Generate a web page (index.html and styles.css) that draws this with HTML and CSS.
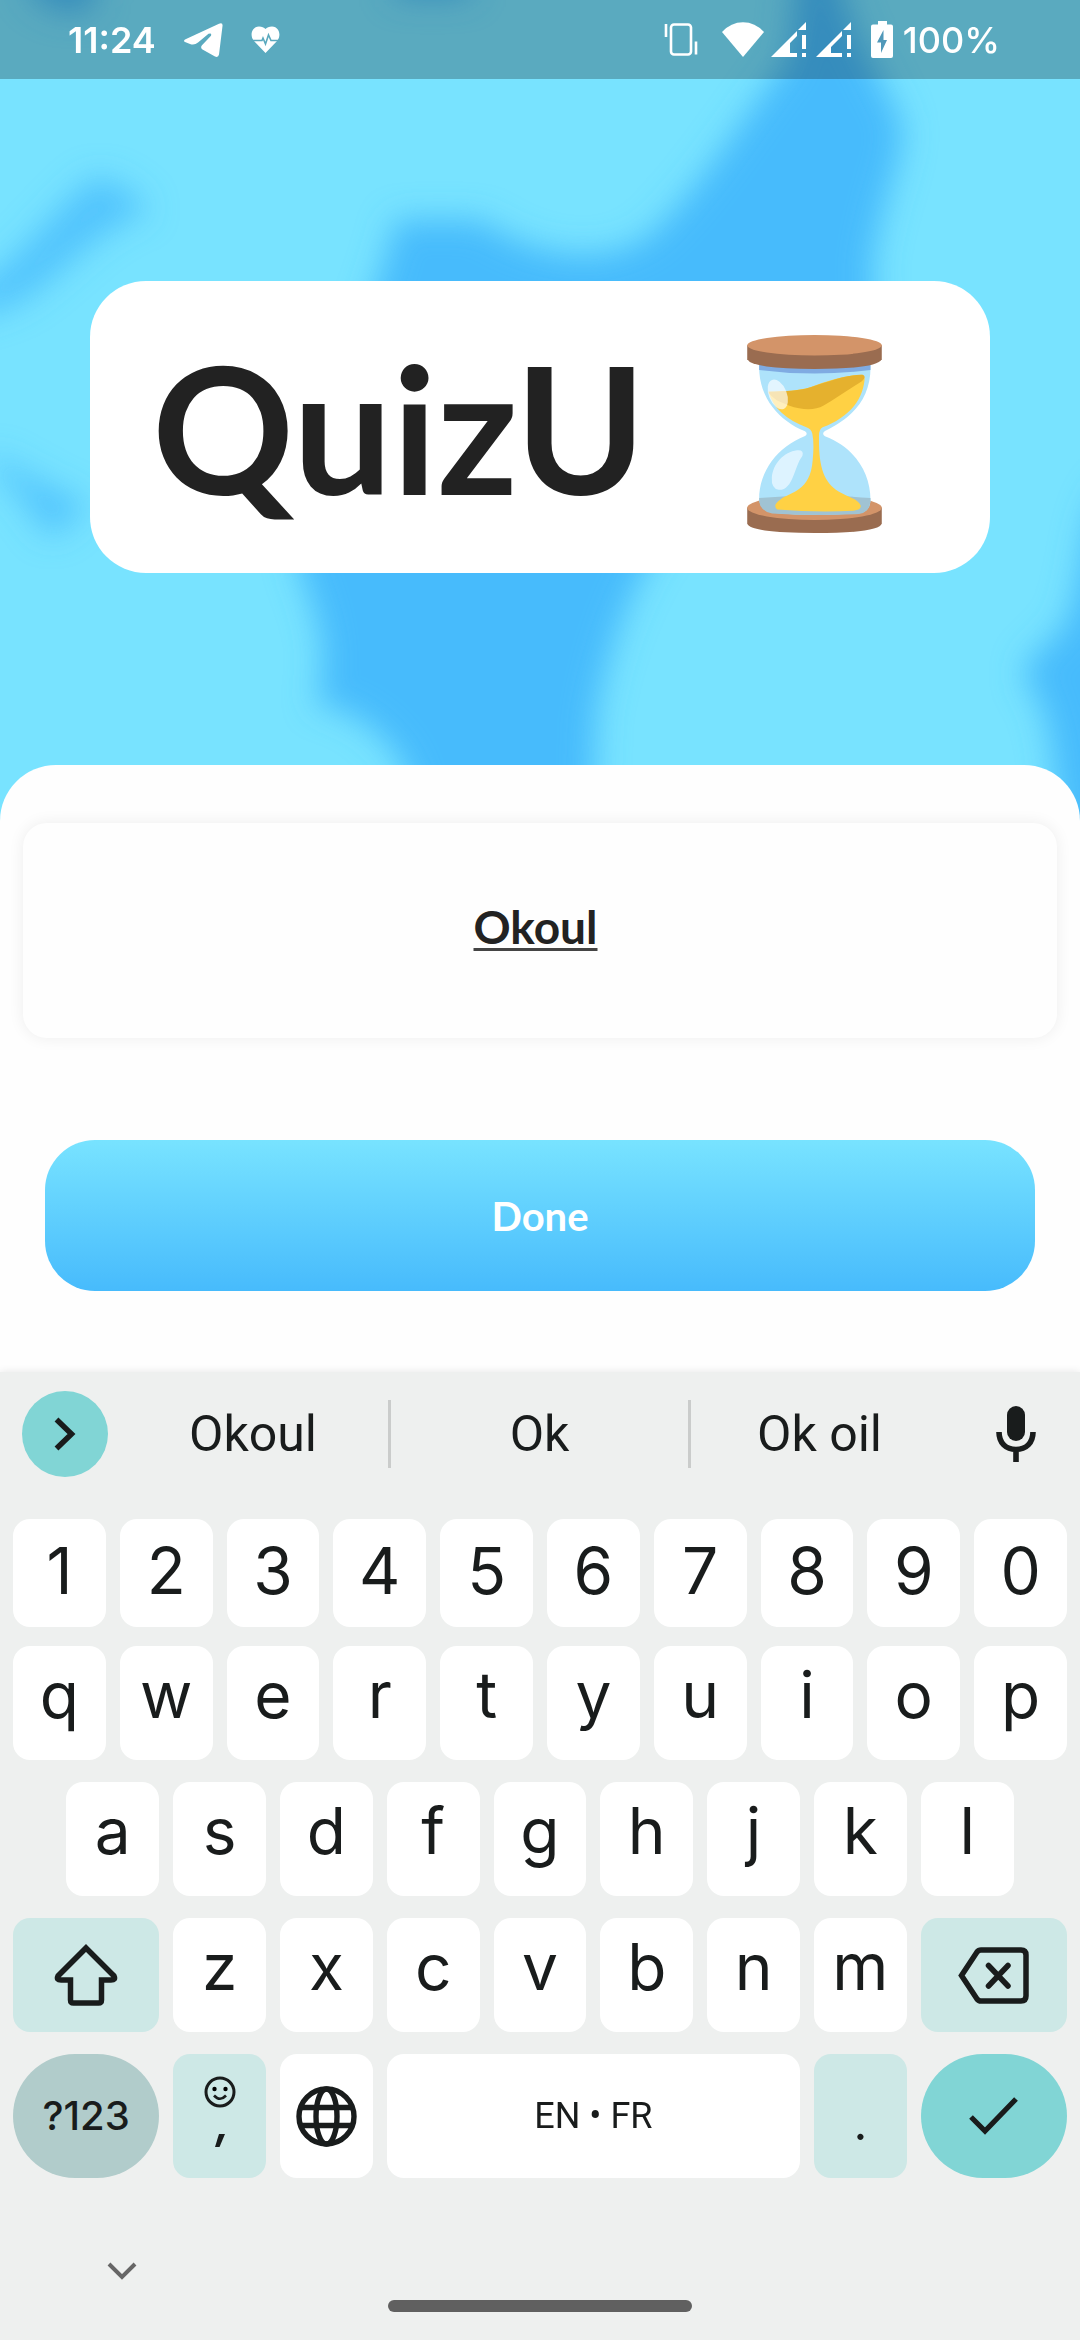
FILE: index.html
```html
<!DOCTYPE html>
<html lang="en">
<head>
<meta charset="utf-8">
<meta name="viewport" content="width=device-width, initial-scale=1">
<title>QuizU</title>
<link rel="stylesheet" href="styles.css">
</head>
<body>
<section class="hero">
  <svg class="hero-art" viewBox="0 0 1080 830" preserveAspectRatio="none" aria-hidden="true">
    <defs><filter id="soft" x="-20%" y="-20%" width="140%" height="140%"><feGaussianBlur stdDeviation="16"/></filter></defs>
    <g fill="#47bbfc" filter="url(#soft)">
      <path d="M798 -40H836C845 30 885 80 902 125C905 160 880 200 872 270C890 400 820 450 700 500C650 540 610 630 596 720L590 880H440L405 770C390 740 360 712 315 704C335 650 310 600 296 560C300 450 370 330 396 220H480C530 255 600 270 650 235C700 190 755 100 788 60Z"/>
      <path opacity=".8" d="M-30 290C20 265 60 200 95 178C120 180 140 200 150 212C100 222 60 280 14 305L-30 320Z"/>
      <path opacity=".8" d="M-10 455C20 470 50 490 88 504C75 520 60 530 50 538C30 510 10 480 -10 470Z"/>
      <path d="M30 -40H95V2C80 20 50 12 30 -8Z"/>
      <path d="M395 -40H470V-4H395Z"/>
      <path d="M1120 480C1080 500 1090 560 1068 620C1050 650 1020 660 1025 680C1045 700 1052 740 1055 780L1070 880H1120Z"/>
    </g>
  </svg>
  <header class="status">
    <div class="status-group">
      <time class="clock">11:24</time>
      <svg class="st-telegram" width="39" height="34" viewBox="0 0 39 34" fill="#fff"><path d="M1 16.500L35 .7Q39 -.8 38.500 3L35 31.500Q34.200 35 31 33.500L18.500 26.500Q16 24.500 18 22.200L27 12.800Q28 9.500 24.500 10.800L14 19.500Q10.500 22.500 6 21L1 19Q-1 18 1 16.500Z"/></svg>
      <svg width="29" height="27" viewBox="0 0 29 27"><path fill="#fff" d="M14.500 27L2.500 14.500C-1 10 0 1 8 .5C11 .5 13 1.500 14.500 3C16 1.500 18 .5 21 .5C29 1 30 10 26.500 14.500Z"/><path fill="none" stroke="#5aa9be" stroke-width="1.600" d="M0 14.500H11L12 12L14.500 18L17.500 9L20 14.500H29"/></svg>
    </div>
    <div class="status-group status-right">
      <svg class="st-vibrate" width="34" height="33" viewBox="0 0 34 33" fill="none" stroke="#fff" stroke-width="2.600"><rect x="7" y="1.500" width="20" height="30" rx="3"/><path d="M2 1v13M32 18.500v13"/></svg>
      <svg class="st-wifi" width="42" height="35" viewBox="0 0 42 35" fill="#fff"><path d="M0 10Q9 .3 21 .3T42 10L21 35Z"/></svg>
      <svg class="st-signal" width="35" height="35" viewBox="0 0 35 35" fill="#fff"><path d="M0 35L26 9V14L19 21V31H26V35ZM27 8L35 0V8ZM31 13h4v14h-4ZM31 31h4v4h-4Z"/></svg>
      <svg class="st-signal-2" width="35" height="35" viewBox="0 0 35 35" fill="#fff"><path d="M0 35L26 9V14L15 25V31H26V35ZM27 8L35 0V8ZM31 13h4v14h-4ZM31 31h4v4h-4Z"/></svg>
      <svg class="st-battery" width="22" height="37" viewBox="0 0 22 37"><path fill="#fff" d="M7 0h9v3.500h4q2 0 2 2V35q0 2-2 2H2q-2 0-2-2V5.500q0-2 2-2h5Z"/><path fill="#5098b9" d="M12.500 9L6 21.500h4V32L16 19H12.500Z"/></svg>
      <span class="clock">100%</span>
    </div>
  </header>
  <div class="logo-card">
    <h1 class="logo-text">QuizU</h1>
    <svg class="hourglass" width="135" height="198" viewBox="200 103 405 596" aria-label="Hourglass">
      <path fill="#9a6c50" d="M200 622V670Q205 699 403 699T605 670V622Z"/>
      <ellipse cx="402.500" cy="623" rx="202.500" ry="37" fill="#d39469"/>
      <path fill="#aee3fb" d="M236 190H571C575 300 510 355 434 392Q423 400 434 408C520 440 572 515 571 602Q568 640 530 640Q403 650 275 638Q240 632 236 602C234 515 290 440 374 407Q384 400 374 393C295 360 232 290 236 190Z"/>
      <path fill="#a0c3d3" d="M236 594Q403 578 571 594V604Q567 638 535 642Q403 648 275 640Q240 634 236 604Z"/>
      <path fill="#7fabe2" d="M236 190H571V208Q403 230 236 208Z"/>
      <path fill="#ffd144" d="M264 274Q350 272 390 260Q490 222 545 223Q555 225 553 240C545 310 495 355 427 381Q415 388 416 410C415 500 430 545 475 574C500 590 535 595 542 618Q542 630 520 632Q410 638 290 628Q275 615 300 598C330 575 390 575 397 480Q402 430 396 400Q392 385 378 381C320 358 278 325 264 274Z"/>
      <path fill="#e5b12e" d="M264 274Q345 272 375 265C430 250 490 222 548 223Q560 228 545 242C500 270 465 295 430 315Q390 338 325 315L290 300Q268 285 264 274Z"/>
      <ellipse cx="292" cy="282" rx="27" ry="47" transform="rotate(-22 292 282)" fill="#fff" opacity=".65"/>
      <path fill="#ddf3ff" d="M350 450Q372 448 366 467C340 500 340 570 295 569Q272 566 274 532C278 490 310 455 350 450Z"/>
      <path fill="#9a6c50" d="M200 134V176Q215 205 403 205T605 176V134Z"/>
      <ellipse cx="402.500" cy="134" rx="202.500" ry="31" fill="#d39469"/>
    </svg>
  </div>
</section>

<main class="sheet">
  <form class="form" onsubmit="return false">
    <input class="name-input" type="text" aria-label="Your name" value="Okoul" autocomplete="off" spellcheck="false">
    <button class="done" type="submit">Done</button>
  </form>
</main>

<section class="keyboard" aria-label="Keyboard">
  <div class="suggest">
    <button class="expand" type="button" aria-label="Expand toolbar"><svg width="22" height="34" viewBox="0 0 22 34"><path d="M2.500 2.500L17.500 17L2.500 31.500" fill="none" stroke="#191c1c" stroke-width="5.500"/></svg></button>
    <button class="word" type="button">Okoul</button>
    <button class="word divided" type="button">Ok</button>
    <button class="word divided" type="button">Ok oil</button>
    <button class="mic" type="button" aria-label="Voice typing"><svg width="40" height="56" viewBox="0 0 40 56"><rect x="11" y="0" width="18" height="35" rx="9" fill="#191c1c"/><path d="M3 26C3 37 10 43.500 20 43.500S37 37 37 26M20 43V56" fill="none" stroke="#191c1c" stroke-width="5.600"/></svg></button>
  </div>
  <div class="row digits">
    <button class="key">1</button><button class="key">2</button><button class="key">3</button><button class="key">4</button><button class="key">5</button><button class="key">6</button><button class="key">7</button><button class="key">8</button><button class="key">9</button><button class="key">0</button>
  </div>
  <div class="row letters">
    <button class="key">q</button><button class="key">w</button><button class="key">e</button><button class="key">r</button><button class="key">t</button><button class="key">y</button><button class="key">u</button><button class="key">i</button><button class="key">o</button><button class="key">p</button>
  </div>
  <div class="row letters inset">
    <button class="key">a</button><button class="key">s</button><button class="key">d</button><button class="key">f</button><button class="key">g</button><button class="key">h</button><button class="key">j</button><button class="key">k</button><button class="key">l</button>
  </div>
  <div class="row letters">
    <button class="key wide tint icon-key" aria-label="Shift"><svg width="64" height="62" viewBox="0 0 64 62"><path d="M32 4L60 32Q62 36 57 36H47.500V56Q47.500 59 44.500 59H19.500Q16.500 59 16.500 56V36H7Q2 36 4 32Z" fill="none" stroke="#191c1c" stroke-width="5.500"/></svg></button>
    <button class="key">z</button><button class="key">x</button><button class="key">c</button><button class="key">v</button><button class="key">b</button><button class="key">n</button><button class="key">m</button>
    <button class="key wide tint icon-key" aria-label="Backspace"><svg width="72" height="57" viewBox="0 0 72 57" fill="none" stroke="#191c1c" stroke-width="5.500"><path d="M3.500 28.500L19 5Q20.500 3 23 3H63Q68 3 68 8V49Q68 54 63 54H23Q20.500 54 19 52Z"/><path stroke-linecap="round" d="M30.500 18.500L50 39M50 18.500L30.500 39"/></svg></button>
  </div>
  <div class="row bottom">
    <button class="key wide pill symbols">?123</button>
    <button class="key tint comma" aria-label="Comma, emoji"><svg width="32" height="32" viewBox="0 0 32 32"><circle cx="16" cy="16" r="14" fill="none" stroke="#191c1c" stroke-width="3"/><circle cx="10.500" cy="13" r="2.200"/><circle cx="21.500" cy="13" r="2.200"/><path d="M10 19.500Q16 26 22 19.500" fill="none" stroke="#191c1c" stroke-width="2.600"/></svg><svg width="10" height="13" viewBox="0 0 10 13"><path fill="#191c1c" d="M4 0H10L4.500 13H0Z"/></svg></button>
    <button class="key icon-key" aria-label="Change language"><svg width="61" height="61" viewBox="0 0 61 61" fill="none" stroke="#191c1c" stroke-width="5.400"><circle cx="30.500" cy="30.500" r="27.500"/><ellipse cx="30.500" cy="30.500" rx="10.500" ry="27.500"/><path d="M5 21.500H56M5 39.500H56"/></svg></button>
    <button class="key space">EN • FR</button>
    <button class="key tint period">.</button>
    <button class="key wide pill enter icon-key" aria-label="Enter"><svg width="50" height="40" viewBox="0 0 50 40"><path d="M2 21L16 35L47 3" fill="none" stroke="#191c1c" stroke-width="5.200"/></svg></button>
  </div>
  <footer class="nav">
    <button class="hide" type="button" aria-label="Hide keyboard"><svg width="30" height="18" viewBox="0 0 30 18"><path d="M2 2L15 15L28 2" fill="none" stroke="#666" stroke-width="4"/></svg></button>
    <div class="handle"></div>
  </footer>
</section>
</body>
</html>
```
FILE: styles.css
```css
* { box-sizing: border-box; }

body {
  margin: 0;
  min-height: 100vh;
  display: flex;
  flex-direction: column;
  background: #fefefe;
  color: #222;
  font-family: Lato, "Open Sans", sans-serif;
}

button, input {
  font: inherit;
  color: inherit;
  border: 0;
  margin: 0;
  padding: 0;
  background: none;
}

svg { display: block; flex: none; }

/* Hero */
.hero {
  position: relative;
  overflow: hidden;
  padding-bottom: 256px;
  background: #78e3ff;
}

.hero-art {
  position: absolute;
  inset: 0;
  width: 100%;
  height: 100%;
}

.status {
  position: relative;
  display: flex;
  justify-content: space-between;
  height: 79px;
  padding: 0 80px 0 68px;
  background: rgba(0, 0, 0, .25);
  color: #fff;
  font: 600 36px/44px Inter, sans-serif;
}

.status-group { display: flex; align-items: center; gap: 28px; }
.status-right { gap: 0; font-weight: 500; }
.st-vibrate { margin-right: 24px; }
.st-wifi { margin-right: 7px; }
.st-signal { margin-right: 10px; }
.st-signal-2 { margin-right: 20px; }
.st-battery { margin-right: 10px; }

.logo-card {
  position: relative;
  display: flex;
  align-items: center;
  justify-content: space-between;
  height: 292px;
  margin: 202px 90px 0;
  padding: 0 108px 0 62px;
  border-radius: 56px;
  background: #fff;
}

.logo-text { margin: 0; font-size: 176px; line-height: 212px; font-weight: 700; }
.hourglass { margin-top: 14px; }

/* Sheet */
.sheet {
  position: relative;
  flex: 1;
  margin-top: -64px;
  padding: 58px 23px 80px;
  border-radius: 56px 56px 0 0;
  background: #fefefe;
}

.form { display: flex; flex-direction: column; gap: 102px; }

.name-input {
  width: 100%;
  height: 215px;
  padding: 0 9px 8px 0;
  border-radius: 24px;
  background: #fefefe;
  box-shadow: 0 0 16px rgba(0, 0, 0, .07);
  font-size: 46px;
  font-weight: 700;
  text-align: center;
  text-decoration: underline 3px #444;
  text-underline-offset: 4px;
  text-decoration-skip-ink: none;
  outline: none;
}

.done {
  height: 151px;
  margin: 0 22px;
  border-radius: 50px;
  background: linear-gradient(#78e3ff, #47bbfc);
  color: #fff;
  font-size: 40px;
  font-weight: 700;
}

/* Keyboard */
.keyboard {
  position: relative;
  padding: 0 13px;
  background: #eef0ef;
  box-shadow: 0 0 8px rgba(0, 0, 0, .1);
  color: #191c1c;
  font-family: Inter, Roboto, sans-serif;
}

.suggest {
  display: grid;
  grid-template-columns: 105px 270fr 300fr 260fr 119px;
  align-items: center;
  height: 147px;
  padding-bottom: 23px;
}

.expand {
  display: grid;
  place-items: center;
  width: 86px;
  height: 86px;
  margin-left: 9px;
  border-radius: 50%;
  background: #81d5d5;
}

.word { height: 68px; font-family: Roboto, sans-serif; font-size: 50px; line-height: 60px; }
.divided { border-left: 3px solid #cacccb; }
.mic { display: grid; place-items: center; padding-left: 16px; }

.row {
  display: grid;
  grid-template-columns: repeat(20, 1fr);
  gap: 14px;
  margin-bottom: 22px;
}

.key {
  grid-column: span 2;
  min-width: 0;
  height: 114px;
  border-radius: 17px;
  background: #fff;
  font-size: 64px;
  line-height: 76px;
}

.digits { margin-bottom: 19px; }
.digits .key { height: 108px; padding-bottom: 4px; }
.letters .key { padding-bottom: 16px; }
.letters .icon-key { padding-bottom: 0; }
.inset .key:first-child { grid-column: 2 / span 2; }
.bottom { margin-bottom: 0; }
.bottom .key { height: 124px; }
.key.wide { grid-column: span 3; }
.tint { background: #cde8e6; }
.icon-key { display: grid; place-items: center; }
.key.pill { border-radius: 62px; }
.key.symbols { background: #b1cccb; font-size: 40px; font-weight: 500; }

.comma {
  display: flex;
  flex-direction: column;
  align-items: center;
  justify-content: flex-start;
  gap: 26px;
  padding-top: 22px;
}

.key.space { grid-column: span 8; font-family: Roboto, sans-serif; font-size: 36px; }
.key.period { font-size: 48px; padding-top: 14px; }
.enter { background: #81d5d5; }

.nav { display: grid; grid-template-rows: 122px 40px; }
.hide { align-self: end; justify-self: start; padding: 16px 20px 20px; margin-left: 74px; }
.handle { justify-self: center; width: 304px; height: 12px; border-radius: 6px; background: #606060; }
```
